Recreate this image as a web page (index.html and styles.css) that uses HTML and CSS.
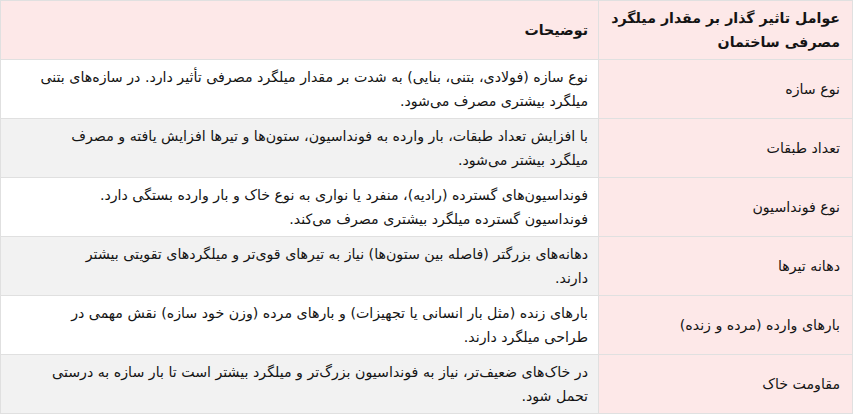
FILE: index.html
```html
<!DOCTYPE html>
<html lang="fa" dir="rtl">
<head>
<meta charset="utf-8">
<link rel="stylesheet" href="styles.css">
</head>
<body>
<table class="factors">
  <thead>
    <tr>
      <th class="col-factor">عوامل تاثیر گذار بر مقدار میلگرد مصرفی ساختمان</th>
      <th class="col-desc">توضیحات</th>
    </tr>
  </thead>
  <tbody>
    <tr>
      <td class="col-factor">نوع سازه</td>
      <td class="col-desc">نوع سازه (فولادی، بتنی، بنایی) به شدت بر مقدار میلگرد مصرفی تأثیر دارد. در سازه‌های بتنی میلگرد بیشتری مصرف می‌شود.</td>
    </tr>
    <tr>
      <td class="col-factor">تعداد طبقات</td>
      <td class="col-desc">با افزایش تعداد طبقات، بار وارده به فونداسیون، ستون‌ها و تیرها افزایش یافته و مصرف<br>میلگرد بیشتر می‌شود.</td>
    </tr>
    <tr>
      <td class="col-factor">نوع فونداسیون</td>
      <td class="col-desc">فونداسیون‌های گسترده (رادیه)، منفرد یا نواری به نوع خاک و بار وارده بستگی دارد.<br>فونداسیون گسترده میلگرد بیشتری مصرف می‌کند.</td>
    </tr>
    <tr>
      <td class="col-factor">دهانه تیرها</td>
      <td class="col-desc">دهانه‌های بزرگتر (فاصله بین ستون‌ها) نیاز به تیرهای قوی‌تر و میلگردهای تقویتی بیشتر<br>دارند.</td>
    </tr>
    <tr>
      <td class="col-factor">بارهای وارده (مرده و زنده)</td>
      <td class="col-desc">بارهای زنده (مثل بار انسانی یا تجهیزات) و بارهای مرده (وزن خود سازه) نقش مهمی در<br>طراحی میلگرد دارند.</td>
    </tr>
    <tr>
      <td class="col-factor">مقاومت خاک</td>
      <td class="col-desc">در خاک‌های ضعیف‌تر، نیاز به فونداسیون بزرگ‌تر و میلگرد بیشتر است تا بار سازه به درستی<br>تحمل شود.</td>
    </tr>
  </tbody>
</table>
</body>
</html>
```
FILE: styles.css
```css
html, body {
  margin: 0;
  padding: 0;
  background: #ffffff;
}
body {
  font-family: "DejaVu Sans", "Noto Sans Arabic", sans-serif;
  color: #141414;
  font-size: 14.2px;
}
.factors {
  width: 853px;
  border-collapse: collapse;
  table-layout: fixed;
  direction: rtl;
}
.factors th,
.factors td {
  border: 1px solid #e0e0e0;
  padding: 5px 12px 5px 6px;
  text-align: right;
  vertical-align: middle;
  line-height: 24px;
  height: 48px;
}
.factors th {
  font-weight: bold;
  background: #fde8e8;
}
.factors .col-factor {
  width: 235px;
  background: #fde8e8;
}
.factors .col-desc {
  padding-right: 10px;
}
.factors tbody tr:nth-child(odd) .col-desc {
  background: #ffffff;
}
.factors tbody tr:nth-child(even) .col-desc {
  background: #f2f2f2;
}
.factors thead .col-desc {
  background: #fde8e8;
}
```
